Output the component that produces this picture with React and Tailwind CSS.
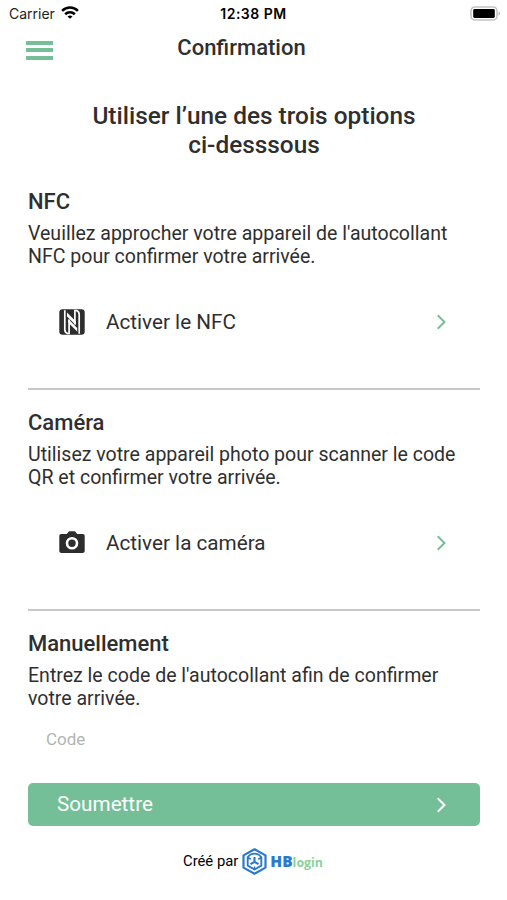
const sections = [
    {
        title: "NFC",
        lines: ["Veuillez approcher votre appareil de l'autocollant", "NFC pour confirmer votre arrivée."],
        action: "Activer le NFC",
        icon: NfcIcon,
    },
    {
        title: "Caméra",
        lines: ["Utilisez votre appareil photo pour scanner le code", "QR et confirmer votre arrivée."],
        action: "Activer la caméra",
        icon: CameraIcon,
    },
];

function WifiIcon() {
    return (
        <svg width="18" height="13" viewBox="0 0 20 14" fill="none" stroke="#000" strokeWidth="2.8">
            <path d="M1.2 5.2c5-4.9 12.6-4.9 17.6 0" />
            <path d="M4.6 8.9c3.1-2.9 7.7-2.9 10.8 0" />
            <path d="M10 14 7.2 11.4c1.7-1.5 3.9-1.5 5.6 0z" fill="#000" stroke="none" />
        </svg>
    );
}

function BatteryIcon() {
    return (
        <svg width="32" height="15" viewBox="0 0 32 15">
            <rect x="1" y="1" width="26" height="13" rx="4" fill="#fff" stroke="#c4c4c4" strokeWidth="1.6" />
            <rect x="3.2" y="3" width="21.6" height="9" rx="1.4" fill="#000" />
            <path d="M28.6 5.3c2 .8 2 3.6 0 4.4z" fill="#b5b5b5" />
        </svg>
    );
}

function NfcIcon() {
    return (
        <svg width="26" height="26" viewBox="0 0 26 26">
            <rect x=".3" y=".3" width="25.4" height="25.4" rx="3.2" fill="#2d2d2d" />
            <g fill="none" stroke="#fff" strokeWidth="1.7">
                <path d="M5.8 1.2v19.6c0 1.8.9 3 2.7 3.7h1.6V10.5" />
                <path d="M20.2 24.8V5.2c0-1.8-.9-3-2.7-3.7h-1.6v14" />
            </g>
            <path d="M8 3.5 16.7 12.2v3.9L8 7.4zM9.3 10l8.9 8.9v3.7l-8.9-8.9z" fill="#fff" />
        </svg>
    );
}

function CameraIcon() {
    return (
        <svg width="26" height="24" viewBox="0 0 26 24">
            <path d="M2.2 2.9h5.6L9.4.9c.3-.4.7-.6 1.3-.6h4.6c.6 0 1 .2 1.3.6l1.6 2h5.6c1.1 0 1.9.8 1.9 1.9v15.3c0 1.1-.8 1.9-1.9 1.9H2.2c-1.1 0-1.9-.8-1.9-1.9V4.8c0-1.1.8-1.9 1.9-1.9z" fill="#2d2d2d" />
            <circle cx="13" cy="12.2" r="5" fill="none" stroke="#fff" strokeWidth="2.6" />
        </svg>
    );
}

function Chevron({ className }) {
    return (
        <svg className={className} width="10" height="16" viewBox="0 0 10 16" fill="none" stroke="currentColor" strokeWidth="2">
            <path d="m.7 1.2 6.8 6.8-6.8 6.8" />
        </svg>
    );
}

function CubeLogo() {
    return (
        <svg width="25" height="27" viewBox="0 0 25 27" fill="none" stroke="#2b78cf" strokeLinejoin="round">
            <path d="M12.5 1.3 23.5 7.4v12.2L12.5 25.7 1.5 19.6V7.4z" strokeWidth="2.2" />
            <path d="M12.5 5.6c3 0 5.2 1.4 6.8 3.6v8.4l-6.8 3.9-6.8-3.9V9.2c1.6-2.2 3.8-3.6 6.8-3.6z" strokeWidth="1.9" />
            <path d="M12.5 9v4.8l4 2.4M12.5 13.8l-4 2.4" strokeWidth="2.1" />
            <path d="m5.7 9.5 3.1 1.7M19.3 9.5l-3.1 1.7M12.5 18.5v3" strokeWidth="1.6" />
        </svg>
    );
}

function Section({ title, lines, children }) {
    return (
        <section>
            <h2 className="text-[22px] leading-[26px] font-medium">{title}</h2>
            <p className="mt-[7px] text-[19.55px] leading-[23px] whitespace-nowrap">
                {lines[0]}
                <br />
                {lines[1]}
            </p>
            {children}
        </section>
    );
}

export default function App() {
    return (
        <div className="h-[900px] w-[507px] overflow-hidden bg-white font-['Roboto',sans-serif] text-[#2f2f2f]">
            <div className="grid h-[27px] grid-cols-[1fr_auto_1fr] items-center pr-[5px] pl-[9px] font-['Inter',sans-serif] text-[14px] text-black">
                <div className="flex items-center gap-1.5">
                    <span className="text-[#222]">Carrier</span>
                    <span className="pb-0.5">
                        <WifiIcon />
                    </span>
                </div>
                <span className="pr-1 text-center text-[14px] font-semibold tracking-[0.5px]">12:38 PM</span>
                <div className="flex justify-end">
                    <BatteryIcon />
                </div>
            </div>

            <header className="grid h-[45px] grid-cols-[1fr_auto_1fr] items-center pr-[50px] pl-[26px]">
                <button type="button" className="flex w-[27px] flex-col gap-[3.5px] pt-px">
                    <span className="h-1 bg-[#75bf98]" />
                    <span className="h-1 bg-[#75bf98]" />
                    <span className="h-1 bg-[#75bf98]" />
                </button>
                <span className="pb-1 text-[22px] leading-[26px] font-medium">Confirmation</span>
            </header>

            <main className="pr-[27px] pl-7">
                <h1 className="mt-[30px] mb-[30px] text-center text-[24.4px] leading-[28.5px] font-medium">
                    Utiliser l’une des trois options
                    <br />
                    ci-desssous
                </h1>

                {sections.map(({ title, lines, action, icon: Icon }) => (
                    <div key={title} className="mb-5 h-[201px] border-b-2 border-[#c8c8c8]">
                        <Section title={title} lines={lines}>
                            <button type="button" className="mt-[39px] flex h-[30px] w-full items-center pr-[33px] pl-[31px] text-[20.7px]">
                                <span className="flex w-[47px]">
                                    <Icon />
                                </span>
                                <span className="pt-px">{action}</span>
                                <Chevron className="ml-auto text-[#75bf98]" />
                            </button>
                        </Section>
                    </div>
                ))}

                <Section title="Manuellement" lines={["Entrez le code de l'autocollant afin de confirmer", "votre arrivée."]}>
                    <input
                        type="text"
                        placeholder="Code"
                        className="mt-[14px] block h-[30px] w-full px-[18px] text-[17px] outline-none placeholder:text-[#b3b3b3]"
                    />
                    <button type="button" className="mt-[29px] flex h-[43px] w-full items-center justify-between rounded-[5px] bg-[#75bf98] pr-[33px] pl-[29px] text-[20.7px] text-white">
                        <span className="pt-px">Soumettre</span>
                        <Chevron />
                    </button>
                </Section>
            </main>

            <footer className="mt-[22px] flex items-center justify-center pr-px text-[14.8px] text-black">
                <span>Créé par</span>
                <span className="ml-[4px]"><CubeLogo /></span>
                <span className="ml-[3px] flex items-baseline pt-px font-['Open_Sans',sans-serif]">
                    <span className="text-[15.5px] font-extrabold text-[#2b78cf]">HB</span>
                    <span className="text-[12.4px] font-bold text-[#8dd09a]">login</span>
                </span>
            </footer>
        </div>
    );
}
